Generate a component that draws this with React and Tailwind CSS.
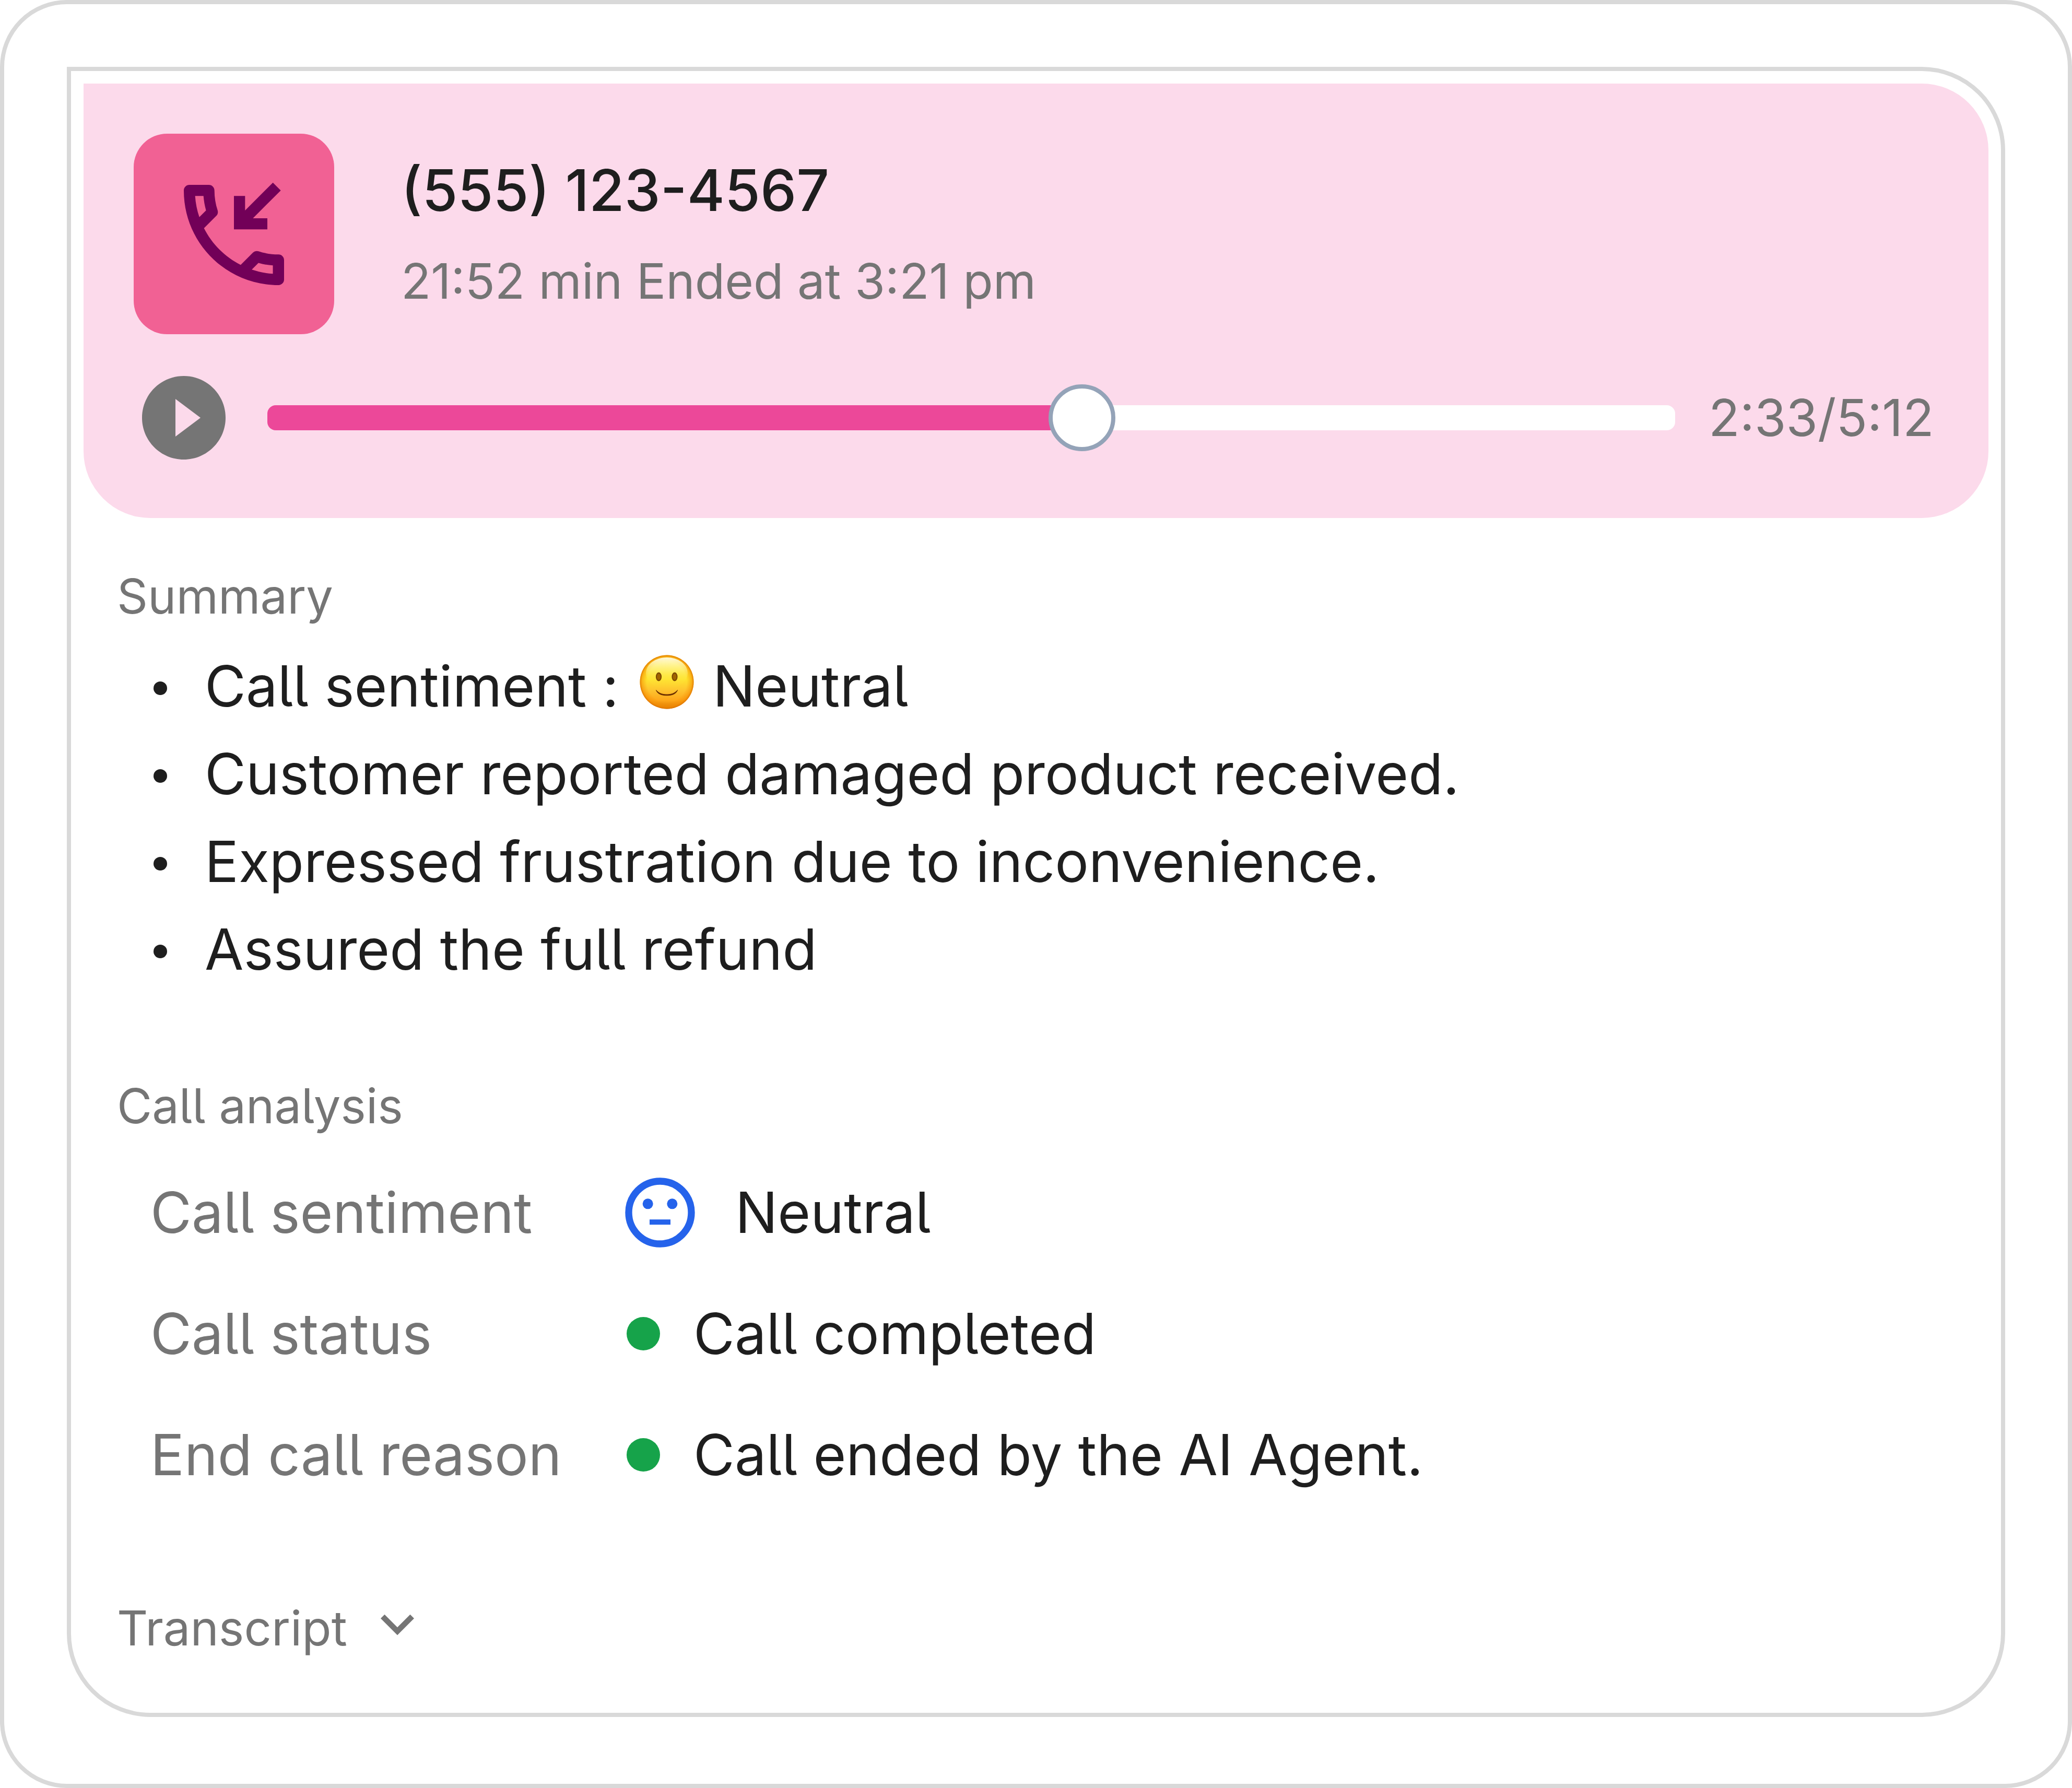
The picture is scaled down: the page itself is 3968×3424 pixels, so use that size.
import { useState } from "react";

const summaryPoints = [
  "Customer reported damaged product received.",
  "Expressed frustration due to inconvenience.",
  "Assured the full refund",
];

function IncomingCallIcon() {
  return (
    <svg viewBox="0 0 24 24" className="size-64" fill="#720058" aria-hidden="true">
      <path d="M12 5h2v2.59l5-5L20.41 4l-5 5H18v2h-6z" />
      <path d="M20 15.5c-1.25 0-2.45-.2-3.57-.57-.1-.03-.21-.05-.31-.05-.26 0-.51.1-.71.29l-2.2 2.2c-2.83-1.44-5.15-3.75-6.59-6.59l2.2-2.2c.28-.26.36-.65.25-1C8.7 6.45 8.5 5.25 8.5 4c0-.55-.45-1-1-1H4c-.55 0-1 .45-1 1 0 9.39 7.61 17 17 17 .55 0 1-.45 1-1v-3.5c0-.55-.45-1-1-1zM5.03 5h1.5c.07.88.22 1.75.46 2.59L5.79 8.8c-.41-1.21-.67-2.48-.76-3.8zM19 18.97c-1.32-.09-2.59-.35-3.8-.75l1.2-1.2c.85.24 1.71.39 2.59.45v1.5z" />
    </svg>
  );
}

function SmileEmoji() {
  return (
    <svg viewBox="0 0 104 104" className="mb-4 size-26" role="img" aria-label="Slightly smiling face">
      <defs>
        <linearGradient id="face" x1="0" y1="0" x2="0" y2="1">
          <stop offset="0" stopColor="#ffe02a" />
          <stop offset="0.45" stopColor="#fee32f" />
          <stop offset="0.66" stopColor="#fec32f" />
          <stop offset="0.84" stopColor="#fea71a" />
          <stop offset="1" stopColor="#d97a04" />
        </linearGradient>
        <radialGradient id="rim" cx="0.5" cy="0.5" r="0.5">
          <stop offset="0.74" stopColor="#f58a00" stopOpacity="0" />
          <stop offset="0.92" stopColor="#f58a00" stopOpacity="0.5" />
          <stop offset="1" stopColor="#dc7200" stopOpacity="0.9" />
        </radialGradient>
        <linearGradient id="shine" x1="0" y1="0" x2="0" y2="1">
          <stop offset="0" stopColor="#fffde8" stopOpacity="0.95" />
          <stop offset="0.4" stopColor="#fff9a0" stopOpacity="0.55" />
          <stop offset="0.75" stopColor="#ffee50" stopOpacity="0.1" />
          <stop offset="1" stopColor="#ffee50" stopOpacity="0" />
        </linearGradient>
      </defs>
      <circle cx="52" cy="52" r="51.5" fill="url(#face)" />
      <circle cx="52" cy="52" r="51.5" fill="url(#rim)" />
      <ellipse cx="52" cy="35" rx="40" ry="30" fill="url(#shine)" />
      <ellipse cx="36.5" cy="42" rx="5.6" ry="8.5" fill="#7d4a00" />
      <ellipse cx="67" cy="42" rx="5.6" ry="8.5" fill="#7d4a00" />
      <ellipse cx="36.5" cy="42" rx="3.5" ry="6" fill="#a06400" />
      <ellipse cx="67" cy="42" rx="3.5" ry="6" fill="#a06400" />
      <path d="M31.5 67.5C37 74 44 76 52 76S67 74 72.5 67.5C70 74.5 63 77.8 52 77.8S34 74.5 31.5 67.5Z" fill="#6b2f00" stroke="#6b2f00" strokeWidth="1" strokeLinejoin="round" />
    </svg>
  );
}

function NeutralFaceIcon() {
  return (
    <svg viewBox="0 0 24 24" className="size-40 shrink-0" fill="#2563eb" aria-hidden="true">
      <circle cx="12" cy="12" r="9" fill="none" stroke="#2563eb" strokeWidth="2" />
      <path d="M9 14h6v1.5H9z" />
      <circle cx="8.5" cy="9.5" r="1.5" />
      <circle cx="15.5" cy="9.5" r="1.5" />
    </svg>
  );
}

function StatusDot() {
  return <span className="ml-4 size-16 shrink-0 rounded-full bg-[#16a34a]" />;
}

function SectionHeading({ children }) {
  return <h2 className="text-[92px] leading-[144px] text-[#757575]">{children}</h2>;
}

function SummaryItem({ children }) {
  return (
    <li className="flex items-center gap-18">
      <span className="mt-2 size-[26px] shrink-0 rounded-full bg-[#1e1e1e]" />
      <span className="flex items-center">{children}</span>
    </li>
  );
}

function AnalysisRow({ label, icon, value }) {
  return (
    <div className="flex items-center">
      <dt className="w-[896px] shrink-0 text-[#757575]">{label}</dt>
      <dd className="flex items-center gap-16">
        {icon}
        {value}
      </dd>
    </div>
  );
}

export default function App() {
  const [position, setPosition] = useState(58.25);
  const [open, setOpen] = useState(false);

  return (
    <main className="rounded-[128px] border-8 border-[#d9d9d9] bg-white p-[120px] pb-32 font-['Inter',sans-serif] text-[108px] leading-[168px] text-[#1e1e1e] [font-feature-settings:'cv05']">
      <article className="rounded-[160px] rounded-tl-none border-8 border-[#d9d9d9] p-6 pb-[90px]">
        <header className="flex flex-col gap-16 rounded-[128px] rounded-tl-none bg-[#fcdaeb] p-24">
          <div className="flex items-center gap-32">
            <div className="flex size-96 shrink-0 items-center justify-center rounded-[64px] bg-[#f16194] pt-1">
              <IncomingCallIcon />
            </div>
            <div className="flex flex-col gap-5">
              <h1 className="text-[110px] leading-[160px] font-medium">(555) 123-4567</h1>
              <p className="text-[94px] leading-[148px] text-[#757575]">21:52 min Ended at 3:21 pm</p>
            </div>
          </div>
          <div className="flex items-center gap-16">
            <button type="button" aria-label="Play recording" className="shrink-0">
              <svg viewBox="0 0 24 24" className="size-48" fill="#757575" aria-hidden="true">
                <path d="M12 2C6.48 2 2 6.48 2 12s4.48 10 10 10 10-4.48 10-10S17.52 2 12 2zm-2 14.5v-9l6 4.5-6 4.5z" />
              </svg>
            </button>
            <input
              type="range"
              aria-label="Playback position"
              min="0"
              max="100"
              step="any"
              value={position}
              onChange={(e) => setPosition(Number(e.target.value))}
              style={{ "--played": `${position}%` }}
              className="h-32 min-w-0 flex-1 cursor-pointer appearance-none bg-transparent [&::-webkit-slider-runnable-track]:h-12 [&::-webkit-slider-runnable-track]:rounded-2xl [&::-webkit-slider-runnable-track]:bg-[linear-gradient(to_right,#ec4899_var(--played),#ffffff_var(--played))] [&::-webkit-slider-thumb]:-mt-10 [&::-webkit-slider-thumb]:size-32 [&::-webkit-slider-thumb]:appearance-none [&::-webkit-slider-thumb]:rounded-full [&::-webkit-slider-thumb]:border-8 [&::-webkit-slider-thumb]:border-[#94a3b8] [&::-webkit-slider-thumb]:bg-white"
            />
            <p className="w-[440px] shrink-0 text-[98px] leading-[144px] whitespace-nowrap text-[#757575]">2:33/5:12</p>
          </div>
        </header>

        <section className="flex flex-col gap-4 px-16 pt-[78px]">
          <SectionHeading>Summary</SectionHeading>
          <ul className="pl-[70px]">
            <SummaryItem>
              Call sentiment :
              <span className="mr-9 ml-10 flex">
                <SmileEmoji />
              </span>
              Neutral
            </SummaryItem>
            {summaryPoints.map((point) => (
              <SummaryItem key={point}>{point}</SummaryItem>
            ))}
          </ul>
        </section>

        <section className="flex flex-col gap-12 px-16 pt-36">
          <SectionHeading>Call analysis</SectionHeading>
          <dl className="flex flex-col gap-16 pl-16">
            <AnalysisRow label="Call sentiment" icon={<NeutralFaceIcon />} value="Neutral" />
            <AnalysisRow label="Call status" icon={<StatusDot />} value="Call completed" />
            <AnalysisRow label="End call reason" icon={<StatusDot />} value="Call ended by the AI Agent." />
          </dl>
        </section>

        <section className="px-16 pt-44">
          <button
            type="button"
            aria-expanded={open}
            onClick={() => setOpen(!open)}
            className="flex items-start gap-8 text-[92px] leading-[144px] text-[#757575]"
          >
            Transcript
            <svg viewBox="0 0 24 24" className="size-32" fill="currentColor" aria-hidden="true">
              <path d="M16.59 8.59L12 13.17 7.41 8.59 6 10l6 6 6-6z" />
            </svg>
          </button>
        </section>
      </article>
    </main>
  );
}
